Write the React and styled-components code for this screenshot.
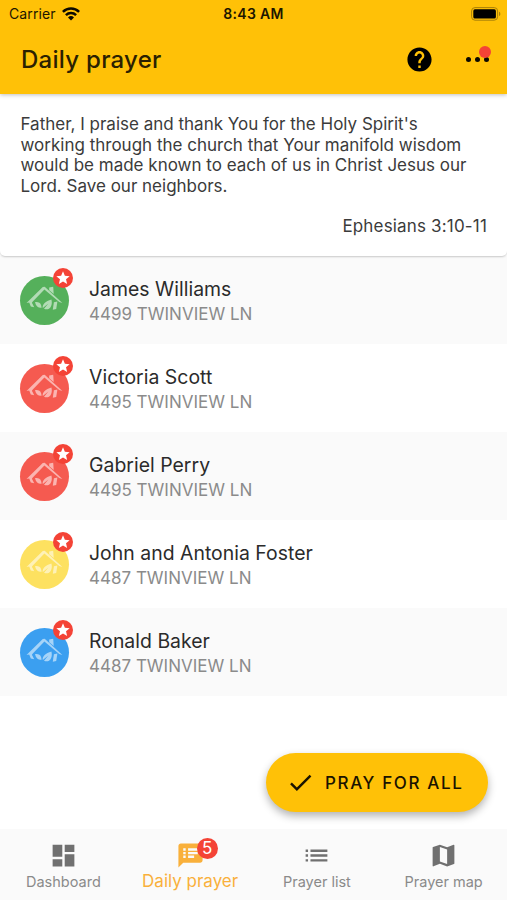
import React, { useState } from "react";
import styled, { createGlobalStyle } from "styled-components";
import {
  MdCheck,
  MdDashboard,
  MdHelp,
  MdList,
  MdMap,
  MdSpeakerNotes,
  MdStar,
} from "react-icons/md";

const NEIGHBORS = [
  { name: "James Williams", address: "4499 TWINVIEW LN", color: "#55b05b" },
  { name: "Victoria Scott", address: "4495 TWINVIEW LN", color: "#f55a50" },
  { name: "Gabriel Perry", address: "4495 TWINVIEW LN", color: "#f55a50" },
  { name: "John and Antonia Foster", address: "4487 TWINVIEW LN", color: "#fde160" },
  { name: "Ronald Baker", address: "4487 TWINVIEW LN", color: "#3b9ff0" },
];

const TABS = [
  { id: "dashboard", label: "Dashboard", Icon: MdDashboard },
  { id: "daily", label: "Daily prayer", Icon: MdSpeakerNotes, count: 5 },
  { id: "list", label: "Prayer list", Icon: MdList },
  { id: "map", label: "Prayer map", Icon: MdMap },
];

function WifiIcon() {
  return (
    <svg width="18" height="14" viewBox="0 0 18 14">
      <g fill="none" stroke="#0d0a00" strokeWidth="2.5">
        <path d="M0.9 4.9a11.6 11.6 0 0 1 16.2 0" />
        <path d="M3.9 8.1a7.3 7.3 0 0 1 10.2 0" />
      </g>
      <path d="M9 13.4L6 10.4a4.3 4.3 0 0 1 6 0z" fill="#0d0a00" />
    </svg>
  );
}

function BatteryIcon() {
  return (
    <svg width="30" height="14" viewBox="0 0 30 14">
      <rect x="0.6" y="0.6" width="26" height="12.6" rx="3.4" fill="none" stroke="#a98009" strokeWidth="1" />
      <rect x="2.3" y="2.3" width="22.6" height="9.2" rx="1.6" fill="#000" />
      <path d="M28 4.7c1.8.6 1.8 3.8 0 4.4z" fill="#a98009" />
    </svg>
  );
}

function HouseIcon() {
  return (
    <svg width="49" height="49" viewBox="0 0 49 49" fill="#fff" fillOpacity="0.55">
      {/* roof */}
      <path d="M6.5 27L22.8 11l1.9-.3L42.4 27l-3.2-1L24.4 13.6 12.8 25.6l-.9 1.2 2.3 4.4-3.4-.8-1.6-3.8z" />
      <path d="M29.2 11.4l4-.6.5 7.2-4.5-3.8z" />
      {/* leaves */}
      <path d="M15 26.2c3-.4 5.4.6 6.2 3.2l.4 2.4c-3.2.4-5.6-1.4-6.6-5.6z" />
      <path d="M31.4 23.4c1 3.8.1 7.6-2.4 9.3-1.5.9-3.5.8-5 0l4.4-5.1-5.6 4.4c-.8-3.6 2.8-7.1 8.6-8.6z" />
      {/* window */}
      <path d="M33.9 26.2l3.5-.6-1.2 7.4-3.4.8z" />
    </svg>
  );
}

export default function App() {
  const [tab, setTab] = useState("daily");

  return (
    <Screen>
      <GlobalStyle />
      <TopBar>
        <StatusBar>
          <Carrier>
            Carrier <WifiIcon />
          </Carrier>
          <Clock>8:43 AM</Clock>
          <BatterySlot>
            <BatteryIcon />
          </BatterySlot>
        </StatusBar>
        <Toolbar>
          <Title>Daily prayer</Title>
          <IconButton aria-label="Help">
            <MdHelp size={29} />
          </IconButton>
          <MoreButton aria-label="More">
            <Dot />
            <Dot />
            <Dot />
            <Alert />
          </MoreButton>
        </Toolbar>
      </TopBar>

      <PrayerCard>
        <Prayer>
          Father, I praise and thank You for the Holy Spirit's
          <br />
          working through the church that Your manifold wisdom
          <br />
          would be made known to each of us in Christ Jesus our
          <br />
          Lord. Save our neighbors.
        </Prayer>
        <Reference>Ephesians 3:10-11</Reference>
      </PrayerCard>

      <List>
        {NEIGHBORS.map((n) => (
          <Row key={n.name}>
            <Avatar $color={n.color}>
              <HouseIcon />
              <StarBadge>
                <MdStar size={16} />
              </StarBadge>
            </Avatar>
            <div>
              <Name>{n.name}</Name>
              <Address>{n.address}</Address>
            </div>
          </Row>
        ))}
      </List>

      <Actions>
        <PrayButton>
          <MdCheck size={29} />
          PRAY FOR ALL
        </PrayButton>
      </Actions>

      <TabBar>
        {TABS.map(({ id, label, Icon, count }) => (
          <Tab key={id} $active={tab === id} onClick={() => setTab(id)}>
            <TabIcon>
              <Icon size={29} />
              {count && <Count>{count}</Count>}
            </TabIcon>
            <TabLabel $active={tab === id}>{label}</TabLabel>
          </Tab>
        ))}
      </TabBar>
    </Screen>
  );
}

const GlobalStyle = createGlobalStyle`
  * {
    box-sizing: border-box;
  }

  body {
    margin: 0;
    background: #fff;
    font-family: Inter, Roboto, sans-serif;
  }

  button {
    border: 0;
    padding: 0;
    background: none;
    font-family: inherit;
    cursor: pointer;
  }

  svg {
    display: block;
    flex: none;
  }
`;

const Screen = styled.div`
  width: 507px;
  height: 900px;
  display: flex;
  flex-direction: column;
  overflow: hidden;
  background: #fff;
`;

const TopBar = styled.header`
  position: relative;
  z-index: 1;
  height: 94px;
  background: #ffc107;
  box-shadow: 0 1px 4px rgba(0, 0, 0, 0.25);
`;

const StatusBar = styled.div`
  height: 26px;
  display: grid;
  grid-template-columns: 1fr auto 1fr;
  align-items: center;
  padding: 1px 6px 0 9px;
  font-size: 14px;
  color: #1d1600;
`;

const Carrier = styled.div`
  display: flex;
  align-items: center;
  gap: 6px;
  letter-spacing: 0.1px;
`;

const Clock = styled.div`
  font-weight: 600;
  letter-spacing: 0.3px;
  margin-right: 3px;
`;

const BatterySlot = styled.div`
  display: flex;
  justify-content: flex-end;
`;

const Toolbar = styled.div`
  height: 67px;
  display: flex;
  align-items: center;
  padding: 0 16px 0 21px;
`;

const Title = styled.h1`
  flex: 1;
  margin: 0;
  font-size: 24px;
  font-weight: 500;
  letter-spacing: 0.27px;
  color: #2b2101;
`;

const IconButton = styled.button`
  color: #000;
  margin-right: 32px;
`;

const MoreButton = styled.button`
  position: relative;
  width: 25px;
  height: 29px;
  display: flex;
  align-items: center;
  gap: 4px;
`;

const Dot = styled.span`
  width: 5px;
  height: 5px;
  border-radius: 50%;
  background: #0b0800;
`;

const Alert = styled.span`
  position: absolute;
  top: 1px;
  right: 0;
  width: 12px;
  height: 12px;
  border-radius: 50%;
  background: #f44336;
`;

const PrayerCard = styled.section`
  height: 162px;
  padding: 20px 20px 0 20.5px;
  background: #fff;
  border-radius: 0 0 5px 5px;
  box-shadow: 0 1px 2px rgba(0, 0, 0, 0.2);
  position: relative;
  font-size: 17px;
  line-height: 20.7px;
  color: #3b3b3b;
`;

const Prayer = styled.p`
  margin: 0;
  white-space: nowrap;
`;

const Reference = styled.p`
  margin: 19px 0 0;
  letter-spacing: 0.17px;
  text-align: right;
`;

const List = styled.div`
  flex: 1;
`;

const Row = styled.div`
  height: 88px;
  display: flex;
  align-items: center;
  gap: 20px;
  padding-left: 20px;

  &:nth-child(odd) {
    background: #fafafa;
  }
`;

const Avatar = styled.div`
  position: relative;
  width: 49px;
  height: 49px;
  border-radius: 50%;
  background: ${({ $color }) => $color};
`;

const StarBadge = styled.span`
  position: absolute;
  top: -8px;
  right: -4px;
  width: 20px;
  height: 20px;
  display: grid;
  place-items: center;
  border-radius: 50%;
  background: #f44336;
  color: #fff;
`;

const Name = styled.div`
  padding-top: 2px;
  font-size: 19.4px;
  line-height: 26px;
  letter-spacing: 0.03px;
  color: #2b2b2b;
`;

const Address = styled.div`
  font-size: 17px;
  line-height: 25px;
  color: #8b8b8b;
`;

const Actions = styled.div`
  display: flex;
  justify-content: flex-end;
  padding: 0 19px 17px 0;
`;

const PrayButton = styled.button`
  width: 222px;
  height: 59px;
  display: flex;
  align-items: center;
  gap: 10px;
  padding-left: 20px;
  border-radius: 30px;
  background: #ffc107;
  box-shadow: 0 4px 8px rgba(0, 0, 0, 0.3);
  font-size: 17px;
  font-weight: 500;
  letter-spacing: 1.62px;
  white-space: nowrap;
  color: #1a1300;
`;

const TabBar = styled.nav`
  height: 71px;
  display: flex;
  background: #fafafa;
`;

const Tab = styled.button`
  flex: 1;
  display: flex;
  flex-direction: column;
  align-items: center;
  padding-top: 12px;
  color: ${({ $active }) => ($active ? "#f9b03b" : "#707070")};
`;

const TabIcon = styled.span`
  position: relative;
`;

const Count = styled.span`
  position: absolute;
  top: -3px;
  right: -13px;
  width: 21px;
  height: 21px;
  border-radius: 50%;
  background: #f44336;
  color: #fff;
  font-size: 17px;
  line-height: 21px;
  text-align: center;
`;

const TabLabel = styled.span`
  font-size: ${({ $active }) => ($active ? 17 : 14.5)}px;
  line-height: ${({ $active }) => ($active ? 22 : 23)}px;
  color: ${({ $active }) => ($active ? "#f9b03b" : "#8a8a8a")};
`;
